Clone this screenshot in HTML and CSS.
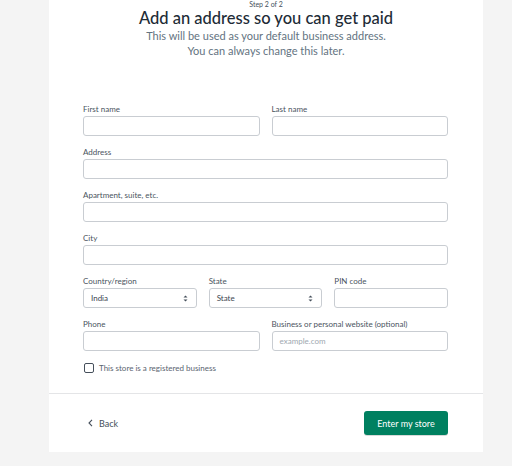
FILE: index.html
```html
<!DOCTYPE html>
<html lang="en">
<head>
<meta charset="utf-8">
<title>Add an address</title>
<link rel="stylesheet" href="styles.css">
</head>
<body>
<div class="card">
  <header class="head">
    <div class="step">Step 2 of 2</div>
    <h1 class="title">Add an address so you can get paid</h1>
    <p class="sub">This will be used as your default business address.<br>You can always change this later.</p>
  </header>
  <form class="form">
    <div class="row two">
      <label class="field"><span class="lbl">First name</span><span class="ctl"></span></label>
      <label class="field"><span class="lbl">Last name</span><span class="ctl"></span></label>
    </div>
    <div class="row one">
      <label class="field"><span class="lbl">Address</span><span class="ctl"></span></label>
    </div>
    <div class="row one">
      <label class="field"><span class="lbl">Apartment, suite, etc.</span><span class="ctl"></span></label>
    </div>
    <div class="row one">
      <label class="field"><span class="lbl">City</span><span class="ctl"></span></label>
    </div>
    <div class="row three">
      <label class="field"><span class="lbl">Country/region</span>
        <span class="ctl sel"><span class="val">India</span>
          <svg class="arr" width="5" height="7" viewBox="0 0 5 7"><path d="M0.5 2.6 L2.5 0.6 L4.5 2.6 Z M0.5 4.4 L2.5 6.4 L4.5 4.4 Z" fill="#454f5b"/></svg>
        </span></label>
      <label class="field"><span class="lbl">State</span>
        <span class="ctl sel"><span class="val">State</span>
          <svg class="arr" width="5" height="7" viewBox="0 0 5 7"><path d="M0.5 2.6 L2.5 0.6 L4.5 2.6 Z M0.5 4.4 L2.5 6.4 L4.5 4.4 Z" fill="#454f5b"/></svg>
        </span></label>
      <label class="field"><span class="lbl">PIN code</span><span class="ctl"></span></label>
    </div>
    <div class="row two">
      <label class="field"><span class="lbl">Phone</span><span class="ctl"></span></label>
      <label class="field"><span class="lbl">Business or personal website (optional)</span><span class="ctl"><span class="ph">example.com</span></span></label>
    </div>
    <label class="check"><span class="box"></span><span class="ctext">This store is a registered business</span></label>
  </form>
  <footer class="foot">
    <a class="back">
      <svg width="5" height="8" viewBox="0 0 5 8"><path d="M4 0.8 L1 4 L4 7.2" fill="none" stroke="#454f5b" stroke-width="1.1"/></svg>
      <span>Back</span>
    </a>
    <button class="btn" type="button">Enter my store</button>
  </footer>
</div>
</body>
</html>
```

FILE: styles.css
```css
* { box-sizing: border-box; }
body {
  margin: 0;
  background: #f4f4f4;
  font-family: Lato, "Noto Sans", sans-serif;
  color: #212b36;
}
.card {
  margin-left: 49px;
  width: 434px;
  background: #fff;
}
.head {
  text-align: center;
}
.step {
  font-size: 7px;
  line-height: 8px;
  color: #454f5b;
}
.title {
  margin: 0;
  font-size: 16.5px;
  line-height: 20px;
  font-weight: 500;
  color: #212b36;
}
.sub {
  margin: 0;
  font-size: 11px;
  line-height: 15px;
  color: #637381;
}
.form {
  padding: 46px 35px 0 34px;
  display: flex;
  flex-direction: column;
  gap: 11px;
}
.row { display: grid; gap: 12px; }
.row.two { grid-template-columns: 1fr 1fr; }
.row.one { grid-template-columns: 1fr; }
.row.three { grid-template-columns: 1fr 1fr 1fr; }
.field { display: flex; flex-direction: column; }
.lbl {
  font-size: 8px;
  line-height: 10px;
  margin-bottom: 2px;
  color: #4a5460;
}
.ctl {
  height: 20px;
  border: 1px solid #c9cdd2;
  border-radius: 3px;
  background: #fff;
  display: flex;
  align-items: center;
  padding: 0 7px;
  font-size: 8px;
}
.sel { justify-content: space-between; padding-right: 8px; }
.val { color: #3d4650; }
.ph { color: #a0a8b0; }
.check {
  margin-top: 1px;
  display: flex;
  align-items: center;
  gap: 5px;
  padding-left: 1px;
}
.box {
  width: 10px;
  height: 10px;
  border: 1px solid #454f5b;
  border-radius: 2px;
}
.ctext { font-size: 8px; color: #5a6470; }
.foot {
  margin-top: 20px;
  border-top: 1px solid #e4e5e7;
  padding: 17px 35px 17px 39px;
  display: flex;
  justify-content: space-between;
  align-items: center;
}
.back {
  display: flex;
  align-items: center;
  gap: 6px;
  font-size: 9px;
  color: #454f5b;
}
.btn {
  width: 84px;
  height: 24px;
  border: none;
  border-radius: 3px;
  background: #008060;
  color: #fff;
  font-family: inherit;
  font-size: 9px;
  box-shadow: 0 1px 0 rgba(0,0,0,0.15);
  padding: 0;
}
```
